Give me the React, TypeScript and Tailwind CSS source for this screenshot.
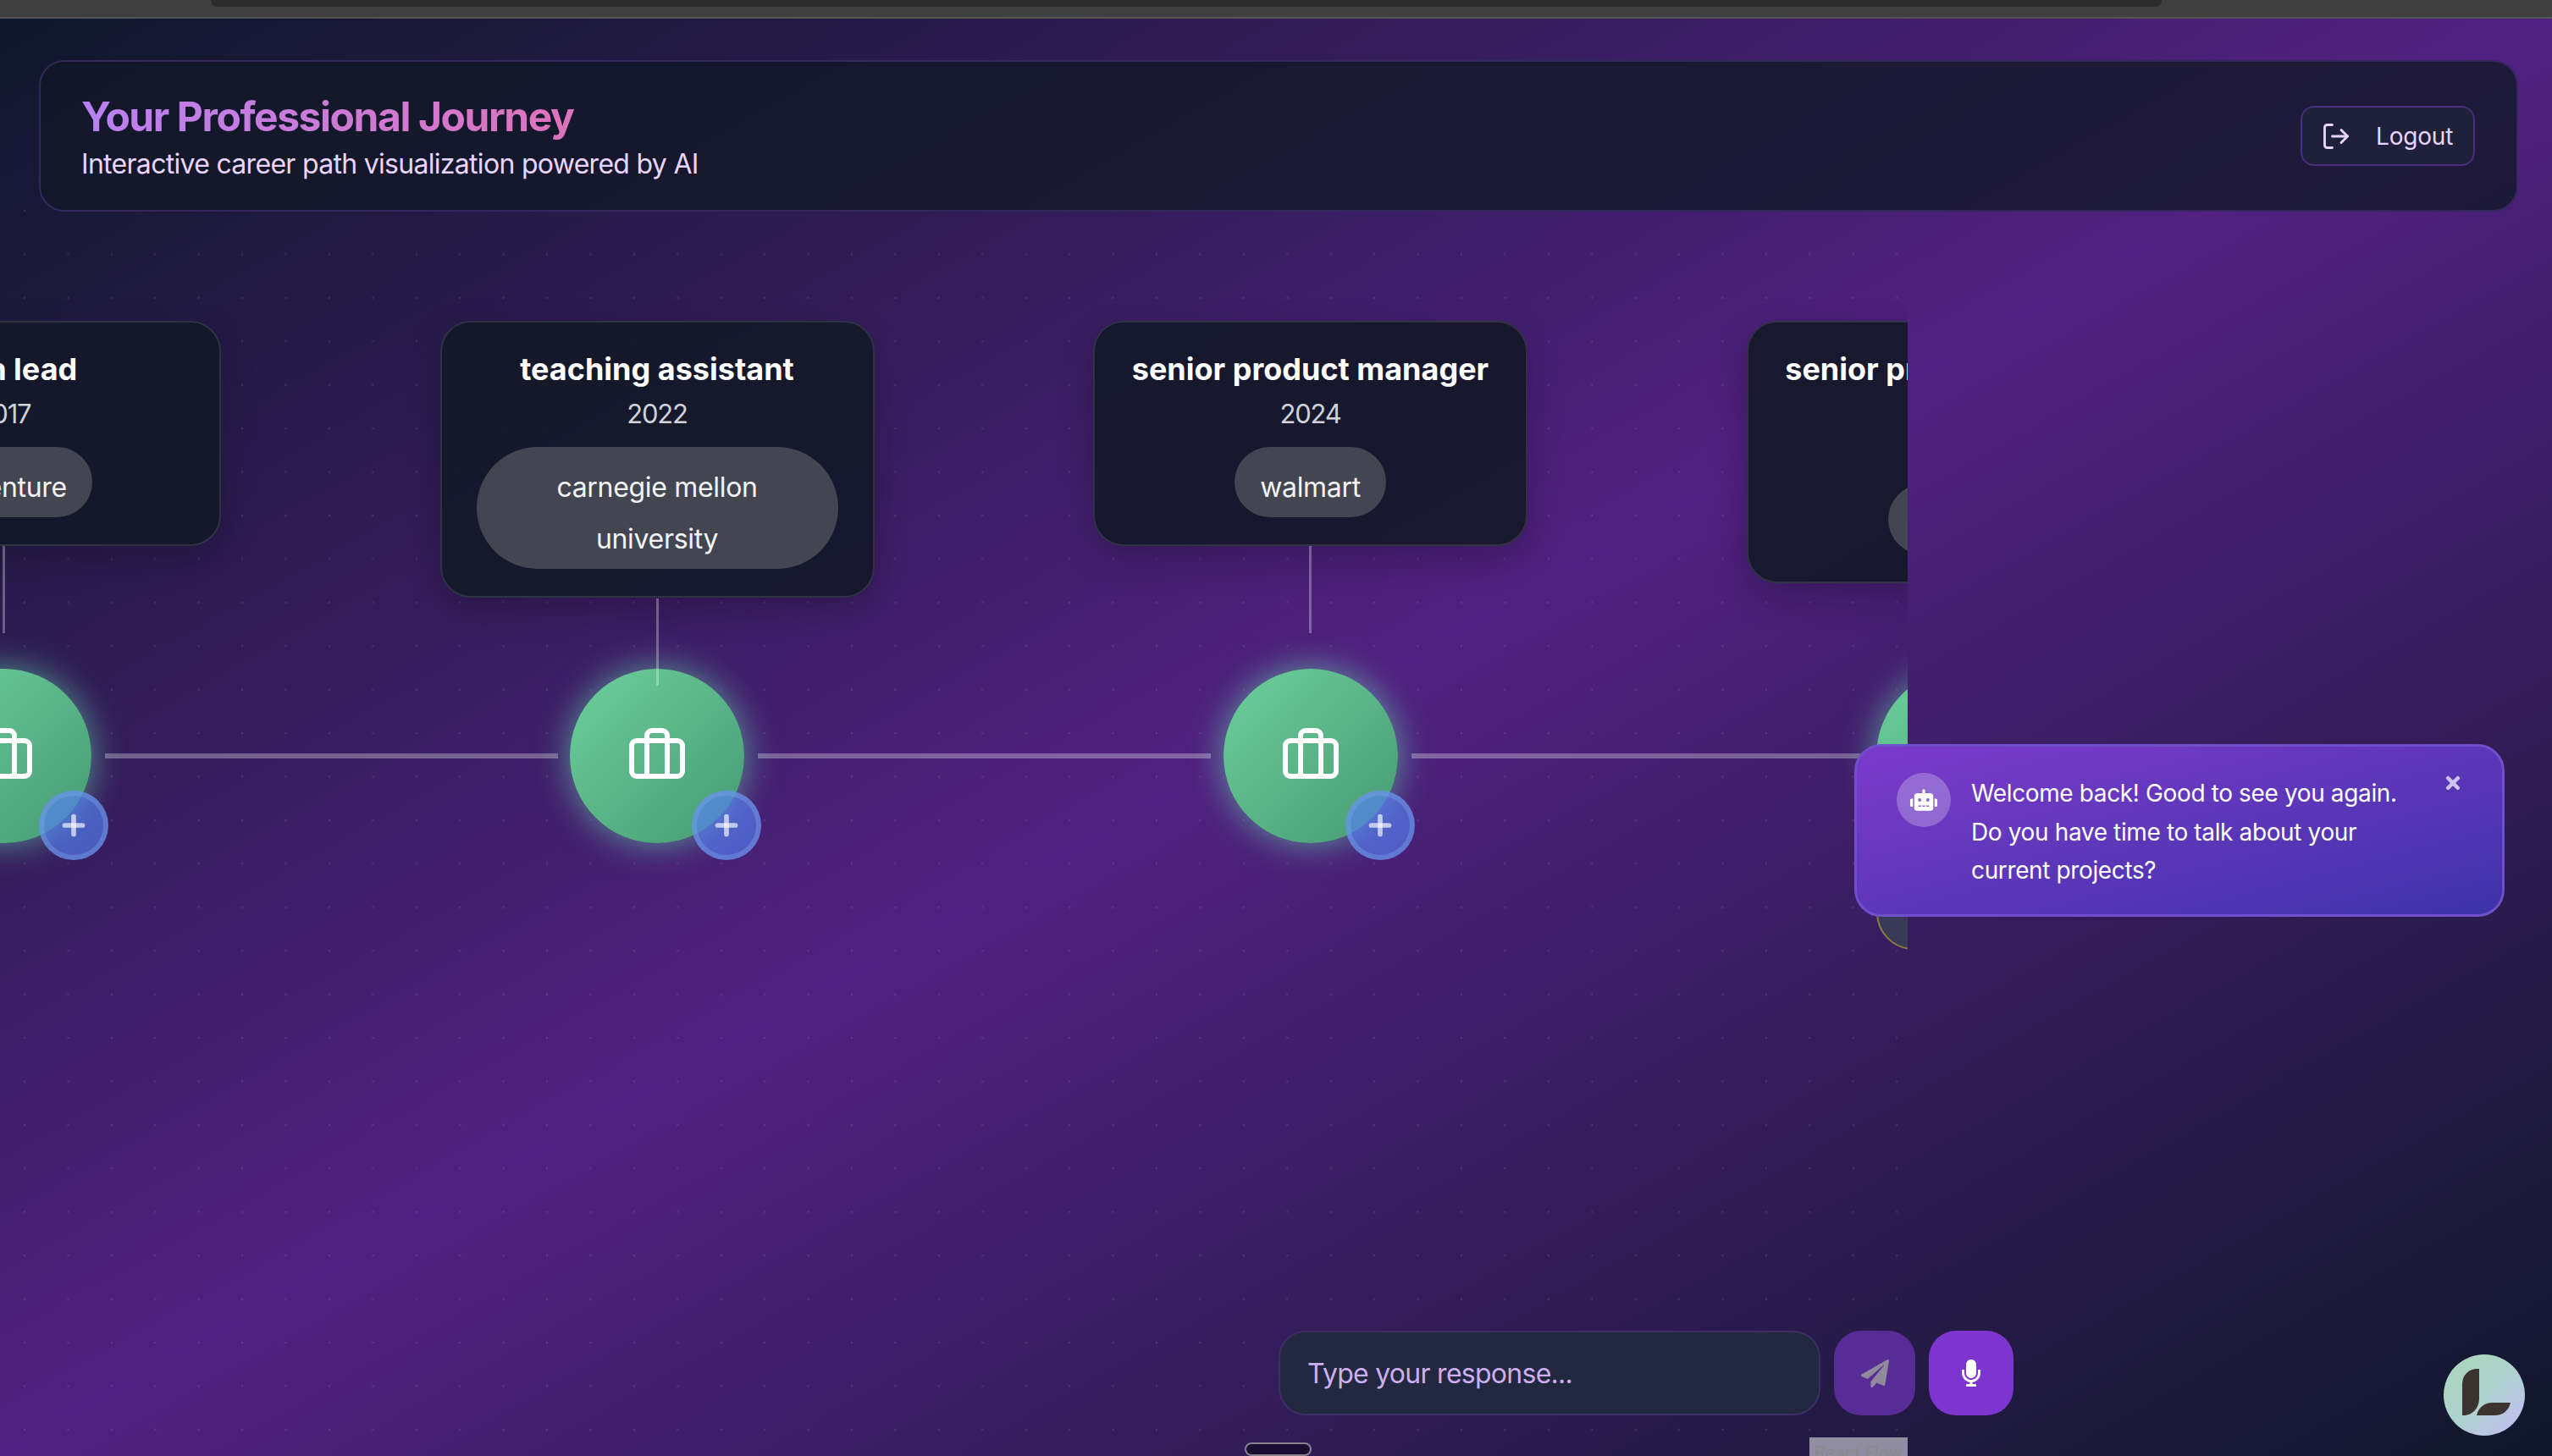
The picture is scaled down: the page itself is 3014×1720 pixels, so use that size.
import { Briefcase, LogOut, Plus } from "lucide-react"
import { FaMicrophone, FaPaperPlane, FaRobot, FaTimes } from "react-icons/fa"

const nodes = [
  { title: "learn lead", year: "2017", company: "accenture", pillGap: "mt-4" },
  { title: "teaching assistant", year: "2022", company: "carnegie mellon university", pillGap: "mt-4" },
  { title: "senior product manager", year: "2024", company: "walmart", pillGap: "mt-4" },
  { title: "senior product manager", year: "2025", company: "walmart", pillGap: "mt-[60px]" },
]

const FIRST_CENTER = 4.5
const NODE_GAP = 771.5

function CareerNode({ node, index }: { node: (typeof nodes)[number]; index: number }) {
  const center = FIRST_CENTER + index * NODE_GAP
  return (
    <div className="absolute top-[131px] w-[513px]" style={{ left: center - 256.5 }}>
      <div className="flex flex-col items-center rounded-[36px] border-2 border-[#2f3242] bg-[#131828]/92 px-[41px] pt-[27px] pb-[32px] shadow-[0_16px_40px_rgba(0,0,0,0.22)]">
        <h3 className="text-[36px] leading-[56px] font-bold whitespace-nowrap text-white">{node.title}</h3>
        <p className="pt-[2px] text-[31px] leading-[46px] tracking-[-0.04em] text-[#cfd2d9]">{node.year}</p>
        <span className={`${node.pillGap} inline-block rounded-full bg-[#434651] px-[30px] pt-[17px] pb-[5px] text-center text-[32px] leading-[61px] tracking-[-0.01em] text-[#f3f4f6]`}>
          {node.company}
        </span>
      </div>
    </div>
  )
}

function NodeStem({ index, top }: { index: number; top: number }) {
  const center = FIRST_CENTER + index * NODE_GAP
  return <div className="absolute z-20 h-[103px] w-[3px] bg-white/30" style={{ left: center - 1.5, top }} />
}

function NodeBubble({ index }: { index: number }) {
  const center = FIRST_CENTER + index * NODE_GAP
  return (
    <div
      className="absolute top-[542px] flex h-[206px] w-[206px] items-center justify-center rounded-full bg-gradient-to-br from-[#6dd09c] to-[#479a73] shadow-[0_0_40px_rgba(110,231,183,0.6)]"
      style={{ left: center - 103 }}
    >
      <Briefcase size={72} strokeWidth={2} className="text-white" />
      <div className="absolute top-[144px] left-[144px] flex h-[82px] w-[82px] items-center justify-center rounded-full border-[6px] border-[#7aa5e6]/40 bg-[#5580f2]/65">
        <Plus size={36} strokeWidth={3.8} className="text-white/65" />
      </div>
    </div>
  )
}

function Edge({ index }: { index: number }) {
  const center = FIRST_CENTER + index * NODE_GAP
  return <div className="absolute top-[642px] h-[6px] w-[535px] bg-white/30" style={{ left: center + 119 }} />
}

function LogoBadge() {
  return (
    <div className="absolute right-[32px] bottom-[24px] h-[96px] w-[96px] overflow-hidden rounded-full bg-gradient-to-br from-[#a9d6bb] via-[#aed2cc] to-[#c6b9f7]">
      <svg viewBox="0 0 96 96" className="h-full w-full blur-[0.5px]">
        <path d="M42 17V52C42 63 34 72 24 72H22V35C22 24 30 17 40 17Z" fill="#3a3330" />
        <path d="M39 72C41 63 48 57 58 57H79C77 66 70 72 60 72Z" fill="#3a3330" />
      </svg>
    </div>
  )
}

export default function App() {
  return (
    <div className="flex h-screen w-screen flex-col overflow-hidden font-['Inter',sans-serif]">
      {/* browser chrome strip */}
      <div className="h-[22px] shrink-0 border-b-2 border-[#555] bg-[#3f3f3f]">
        <div className="mr-[461px] ml-[249px] h-2 rounded-b-xl bg-[#2b2b2b]" />
      </div>

      <main className="relative flex-1 bg-[linear-gradient(to_bottom_right,#0f172a,#502180,#0f172a)]">
        {/* flow canvas, clipped on the right like the reference */}
        <div className="absolute top-[226px] bottom-0 left-0 w-[2253px] overflow-hidden bg-[radial-gradient(circle,rgba(255,255,255,0.1)_1.3px,transparent_1.6px)] bg-[size:51.43px_51.43px] bg-[position:3.3px_-24.7px]">
          {nodes.slice(0, 3).map((_, i) => (
            <Edge key={i} index={i} />
          ))}
          {nodes.map((node, i) => (
            <NodeBubble key={i} index={i} />
          ))}
          {nodes.map((node, i) => (
            <CareerNode key={i} node={node} index={i} />
          ))}
          <NodeStem index={0} top={397} />
          <NodeStem index={1} top={459} />
          <NodeStem index={2} top={397} />
          <div className="absolute top-[780px] left-[2216px] h-[94px] w-[206px] rounded-[44px] border-2 border-[#8a7a3f] bg-[#373b55]" />
          <div className="absolute bottom-0 left-[1470px] h-[16px] w-[79px] rounded-xl border-2 border-[#8a8090] bg-[#1a0f33]" />
          <div className="absolute right-0 bottom-0 h-[22px] w-[116px] overflow-hidden bg-white/50 pt-[5px] pl-[6px] text-[20px] leading-[26px] text-[#8a8a8c]">
            React Flow
          </div>
        </div>

        <header className="relative mt-[49px] mr-[40px] ml-[46px] flex h-[179px] items-center justify-between rounded-[30px] border-2 border-[#33275c] bg-[#111827]/80 pr-[49px] pl-[48px]">
          <div className="pt-[3px]">
            <h1 className="w-fit bg-gradient-to-r from-[#b880f2] to-[#df72bb] bg-clip-text text-[48px] leading-[64px] font-bold tracking-[-1.45px] text-transparent">
              Your Professional Journey
            </h1>
            <p className="text-[32px] leading-[48px] tracking-[-0.7px] text-[#e9d5ff]">Interactive career path visualization powered by AI</p>
          </div>
          <button className="flex h-[71px] w-[206px] items-center gap-[29px] rounded-2xl border-2 border-[#4a2f7f] bg-[#1e2139] pl-[22px] text-[28px] tracking-[-0.2px] text-[#e9d5ff]">
            <LogOut size={36} strokeWidth={1.9} className="shrink-0" />
            Logout
          </button>
        </header>

        {/* assistant message */}
        <div className="absolute top-[857px] left-[2190px] flex h-[204px] w-[768px] rounded-[32px] border-[3px] border-[#6f4fcc] bg-gradient-to-br from-[#7c3acb] to-[#3d32a8] pt-[31px] pl-[47px]">
          <div className="flex h-[64px] w-[64px] shrink-0 items-center justify-center rounded-full bg-white/25">
            <FaRobot size={32} className="text-white" />
          </div>
          <p className="mt-[2px] ml-[24px] w-[530px] text-[28px] leading-[45.5px] tracking-[-0.37px] text-white">
            Welcome back! Good to see you again. Do you have time to talk about your current projects?
          </p>
          <FaTimes size={24} className="absolute top-[31px] right-[46px] text-white/70" />
        </div>

        {/* reply bar */}
        <div className="absolute bottom-[48px] left-[1510px] flex items-stretch gap-4">
          <div className="flex h-[100px] w-[640px] items-center rounded-[32px] border-2 border-[#3d2f63] bg-[#222840] pt-[2px] pl-[32px] text-[32px] tracking-[-0.73px] text-[#cdaef0]">
            Type your response...
          </div>
          <button className="flex w-[96px] items-center justify-center rounded-[32px] bg-[#582c96] text-[#908a9c]">
            <FaPaperPlane size={33} />
          </button>
          <button className="flex w-[100px] items-center justify-center rounded-[32px] bg-[#7e35d0] text-white">
            <FaMicrophone size={32} />
          </button>
        </div>

        <LogoBadge />
      </main>
    </div>
  )
}
